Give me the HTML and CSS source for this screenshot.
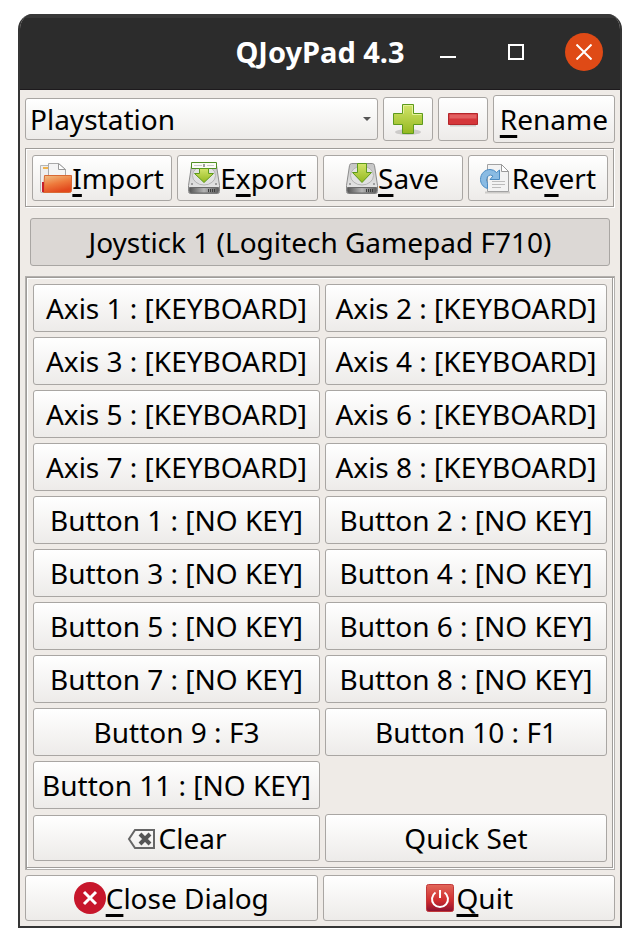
FILE: index.html
```
<!DOCTYPE html>
<html lang="en">
<head>
    <meta charset="UTF-8">
    <meta name="viewport" content="width=device-width, initial-scale=1.0">
    <title>QJoyPad 4.3</title>
    <link rel="stylesheet" href="styles.css">
</head>
<body>
    <!-- Shared gradients and the drive used by Export and Save -->
    <svg class="defs" aria-hidden="true">
        <defs>
            <linearGradient id="green" x1="0" y1="0" x2="0" y2="1">
                <stop offset="0" stop-color="#d3e56b"/>
                <stop offset="1" stop-color="#93b81f"/>
            </linearGradient>
            <linearGradient id="orange" x1="0" y1="0" x2="0.4" y2="1">
                <stop offset="0" stop-color="#f0c186"/>
                <stop offset="0.55" stop-color="#ee7a3c"/>
                <stop offset="1" stop-color="#e2491d"/>
            </linearGradient>
            <linearGradient id="metal" x1="0" y1="0" x2="0" y2="1">
                <stop offset="0" stop-color="#c4c4c4"/>
                <stop offset="1" stop-color="#ececec"/>
            </linearGradient>
            <linearGradient id="metalFront" x1="0" y1="0" x2="1" y2="0">
                <stop offset="0" stop-color="#555555"/>
                <stop offset="0.5" stop-color="#b4b4b4"/>
                <stop offset="1" stop-color="#5c5c5c"/>
            </linearGradient>
            <linearGradient id="red" x1="0" y1="0" x2="0" y2="1">
                <stop offset="0" stop-color="#e2685a"/>
                <stop offset="0.6" stop-color="#cf2c2f"/>
                <stop offset="1" stop-color="#8c1030"/>
            </linearGradient>
            <symbol id="drive" viewBox="0 0 32 32">
                <path d="M5.500 1.500h21q1.500 0 2 2l3 20v6q0 2-2 2h-27q-2 0-2-2v-6l3-20q.5-2 2-2z" fill="url(#metal)" stroke="#8c8c8c"/>
                <ellipse cx="16" cy="13.500" rx="11.500" ry="9.500" fill="#e2e2e2" stroke="#b4b4b4"/>
                <path d="M1.500 25.500h29v4q0 1.500-1.500 1.500H3q-1.500 0-1.500-1.500z" fill="url(#metalFront)" stroke="#6a6a6a"/>
                <path d="M20.500 27v3M22.500 27v3M24.500 27v3M26.500 27v3" stroke="#3c3c3c"/>
                <circle cx="4" cy="22" r="1" fill="#888"/>
                <circle cx="28" cy="22" r="1" fill="#888"/>
            </symbol>
        </defs>
    </svg>

    <div class="window">
        <header class="titlebar">
            <h1>QJoyPad 4.3</h1>
            <div class="window-controls">
                <button class="control" aria-label="Minimize">
                    <svg width="16" height="16" viewBox="0 0 16 16"><path d="M0 13h16" stroke="#fff" stroke-width="2"/></svg>
                </button>
                <button class="control" aria-label="Maximize">
                    <svg width="16" height="16" viewBox="0 0 16 16"><path d="M1 1h14v14H1z" fill="none" stroke="#fff" stroke-width="2"/></svg>
                </button>
                <button class="control close" aria-label="Close">
                    <svg width="16" height="16" viewBox="0 0 16 16"><path d="M0.500 0.500l15 15M15.500 0.500l-15 15" stroke="#fff" stroke-width="2"/></svg>
                </button>
            </div>
        </header>

        <main>
            <div class="layout-row">
                <div class="combo">
                    <select aria-label="Layout">
                        <option>Playstation</option>
                    </select>
                </div>
                <button class="btn icon-only" aria-label="Add layout">
                    <svg width="32" height="32" viewBox="0 0 32 32">
                        <ellipse cx="16" cy="29" rx="13" ry="3" fill="#000" opacity="0.150"/>
                        <path d="M10.500 1.500h11v9h9v11h-9v9h-11v-9h-9v-11h9z" fill="url(#green)" stroke="#5d9a1c"/>
                        <path d="M11.500 10.500v-8h9v9h9" fill="none" stroke="#e6f29c"/>
                    </svg>
                </button>
                <button class="btn icon-only" aria-label="Remove layout">
                    <svg width="32" height="32" viewBox="0 0 32 32">
                        <path d="M3 22.500h26" stroke="#000" stroke-width="2" opacity="0.150"/>
                        <path d="M1.500 10.500h29v11h-29z" fill="#d5363a" stroke="#b3262b"/>
                        <path d="M2.500 11.500h27v4h-27z" fill="#e25f60"/>
                    </svg>
                </button>
                <button class="btn"><u>R</u>ename</button>
            </div>

            <div class="file-row">
                <button class="btn small">
                    <svg width="32" height="32" viewBox="0 0 32 32">
                        <path d="M.5 3.500h10v27h-9q-1 0-1-1z" fill="#eee" stroke="#b5b5b5"/>
                        <path d="M3 6h5" stroke="#f0b24a" stroke-width="2"/>
                        <path d="M8.500 1.500h10l7 6v14h-17z" fill="#f4f4f4" stroke="#a9a9a9"/>
                        <path d="M18.500 1.500v6h7z" fill="#fff" stroke="#999"/>
                        <path d="M3.500 30.500l1-17h27v15q0 2-2 2z" fill="url(#orange)" stroke="#d86a35"/>
                        <path d="M3 30V20" stroke="#c8202b" stroke-width="2"/>
                    </svg>
                    <span><u>I</u>mport</span>
                </button>
                <button class="btn small">
                    <svg width="32" height="32" viewBox="0 0 32 32">
                        <use href="#drive"/>
                        <path d="M3.500.5h25v6h-25z" fill="#fbfbf6" stroke="#4f8f22"/>
                        <path d="M6 3.500h8M19 3.500h7" stroke="#ccc"/>
                        <path d="M16 2v3" stroke="#444"/>
                        <path d="M11.500 6.500h9v5h5L16 20.500l-9.500-9h5z" fill="url(#green)" stroke="#5d9a1c"/>
                    </svg>
                    <span>E<u>x</u>port</span>
                </button>
                <button class="btn small">
                    <svg width="32" height="32" viewBox="0 0 32 32">
                        <use href="#drive"/>
                        <path d="M11.500 1.500h9v9h5L16 20.500l-9.500-10h5z" fill="url(#green)" stroke="#5d9a1c"/>
                    </svg>
                    <span><u>S</u>ave</span>
                </button>
                <button class="btn small">
                    <svg width="32" height="32" viewBox="0 0 32 32">
                        <path d="M5 30.500h25" stroke="#000" stroke-width="2" opacity="0.150"/>
                        <path d="M7.500 2.500h14l7 7v20h-21z" fill="#f3f3f3" stroke="#a2a2a2"/>
                        <path d="M21.500 2.500v7h7z" fill="#fff" stroke="#999"/>
                        <path d="M12 19.500h13M12 22.500h13M12 25.500h9" stroke="#bcbcbc"/>
                        <path d="M7.500 26.500C2.500 25 .5 21 .5 17.500.5 11.500 5 7.500 10 7.500q4 0 6.500 3l3-2.500v9.500H10l3-3.500q-3-2.500-5.500.5-2 3.500 0 7z" fill="#8abbe3" stroke="#4a8ac2"/>
                    </svg>
                    <span>Re<u>v</u>ert</span>
                </button>
            </div>

            <button class="btn joystick-tab">Joystick 1 (Logitech Gamepad F710)</button>

            <section class="joystick-panel">
                <button class="btn">Axis 1 : [KEYBOARD]</button>
                <button class="btn">Axis 2 : [KEYBOARD]</button>
                <button class="btn">Axis 3 : [KEYBOARD]</button>
                <button class="btn">Axis 4 : [KEYBOARD]</button>
                <button class="btn">Axis 5 : [KEYBOARD]</button>
                <button class="btn">Axis 6 : [KEYBOARD]</button>
                <button class="btn">Axis 7 : [KEYBOARD]</button>
                <button class="btn">Axis 8 : [KEYBOARD]</button>
                <button class="btn">Button 1 : [NO KEY]</button>
                <button class="btn">Button 2 : [NO KEY]</button>
                <button class="btn">Button 3 : [NO KEY]</button>
                <button class="btn">Button 4 : [NO KEY]</button>
                <button class="btn">Button 5 : [NO KEY]</button>
                <button class="btn">Button 6 : [NO KEY]</button>
                <button class="btn">Button 7 : [NO KEY]</button>
                <button class="btn">Button 8 : [NO KEY]</button>
                <button class="btn">Button 9 : F3</button>
                <button class="btn">Button 10 : F1</button>
                <button class="btn">Button 11 : [NO KEY]</button>
                <button class="btn small clear">
                    <svg width="32" height="32" viewBox="0 0 32 32">
                        <path d="M8 8h19v18H8L2 17z" fill="none" stroke="#666" stroke-width="2"/>
                        <path d="M13 12l10 10M23 12L13 22" stroke="#555" stroke-width="4"/>
                    </svg>
                    <span>Clear</span>
                </button>
                <button class="btn">Quick Set</button>
            </section>

            <div class="dialog-row">
                <button class="btn small">
                    <svg width="32" height="32" viewBox="0 0 32 32">
                        <circle cx="16" cy="16" r="16" fill="#c7162b"/>
                        <path d="M10 10l12 12M22 10L10 22" stroke="#fff" stroke-width="3"/>
                    </svg>
                    <span><u>C</u>lose Dialog</span>
                </button>
                <button class="btn small">
                    <svg width="32" height="32" viewBox="0 0 32 32">
                        <rect x="2.500" y="2.500" width="27" height="27" rx="2" fill="url(#red)" stroke="#c2383a"/>
                        <path d="M11.500 10.500a8 8 0 1 0 9 0M16 8v8" fill="none" stroke="#fff" stroke-width="2"/>
                    </svg>
                    <span><u>Q</u>uit</span>
                </button>
            </div>
        </main>
    </div>
</body>
</html>
```
FILE: styles.css
```
:root {
    --titlebar: #2c2c2c;
    --frame: #353535;
    --panel: #efebe7;
    --line: #a9a6a3;
    --accent: #df4a16;
}

* {
    box-sizing: border-box;
}

body {
    margin: 0;
    padding: 14px 18px 18px;
    background-color: #fff;
    color: #000;
    font-family: "Noto Sans", "Open Sans", sans-serif;
    font-size: 28px;
    line-height: 38px;
}

.defs {
    position: absolute;
    width: 0;
    height: 0;
}

.window {
    background-color: var(--panel);
    border: 2px solid var(--frame);
    border-top: none;
    border-radius: 15px 15px 0 0;
    overflow: hidden;
}

/* Title bar */
.titlebar {
    display: grid;
    grid-template-columns: 1fr auto 1fr;
    align-items: center;
    height: 76px;
    padding-bottom: 3px;
    background-color: var(--titlebar);
    border-top: 4px solid #383838;
    border-bottom: 1px solid #1d1a1d;
    color: #fff;
}

.titlebar h1 {
    grid-column: 2;
    margin: 0;
    font-size: 29px;
}

.window-controls {
    display: flex;
    justify-content: flex-end;
    gap: 30px;
    padding-right: 17px;
}

.control {
    display: flex;
    align-items: center;
    justify-content: center;
    width: 38px;
    height: 38px;
    padding: 0;
    border: none;
    border-radius: 50%;
    background: none;
    cursor: pointer;
}

.control.close {
    background-color: var(--accent);
}

main {
    display: flex;
    flex-direction: column;
    gap: 5px;
    padding: 5px;
}

/* Buttons */
.btn {
    display: flex;
    align-items: center;
    justify-content: center;
    min-width: 0;
    padding: 4px 6px;
    border: 1px solid var(--line);
    border-radius: 3px;
    background: linear-gradient(#fff, #edebe9);
    color: inherit;
    font: inherit;
    white-space: nowrap;
    cursor: pointer;
}

.btn.small {
    padding: 3px 6px;
}

.btn.icon-only {
    width: 50px;
    padding: 5px 8px;
}

.btn svg {
    flex: none;
}

.btn u {
    text-decoration-thickness: 3px;
    text-underline-offset: 5px;
    text-decoration-skip-ink: none;
}

.layout-row {
    display: flex;
    align-items: center;
    gap: 5px;
}

.combo {
    position: relative;
    flex: 1;
}

.combo select {
    display: block;
    width: 100%;
    padding: 1px 4px;
    border: 1px solid var(--line);
    border-radius: 3px;
    background: linear-gradient(#fff, #edebe9);
    color: inherit;
    font: inherit;
    appearance: none;
}

.combo::after {
    content: '';
    position: absolute;
    top: 19px;
    right: 7px;
    border: 4px solid transparent;
    border-top-color: #555;
    border-bottom: none;
    pointer-events: none;
}

.file-row {
    display: grid;
    grid-template-columns: repeat(4, 1fr);
    gap: 5px;
    margin-right: 1px;
    padding: 6px 5px 5px 6px;
    border: 1px solid #9f9c99;
    box-shadow: inset 1px 1px #fff, 1px 1px #fff;
}

.joystick-tab {
    margin: 6px 5px 5px;
    background: #dcd8d5;
}

/* Joystick inputs */
.joystick-panel {
    display: grid;
    grid-template-columns: 287fr 282fr;
    align-items: center;
    gap: 5px;
    padding: 7px;
    border: 1px solid #b3b0ad;
    box-shadow: inset 1px 1px #9f9c99, inset -1px -1px #fff, inset -2px -2px #9f9c99, inset 2px 2px #fff;
}

.clear {
    grid-column: 1;
}

.dialog-row {
    display: grid;
    grid-template-columns: 1fr 1fr;
    gap: 5px;
}
```
